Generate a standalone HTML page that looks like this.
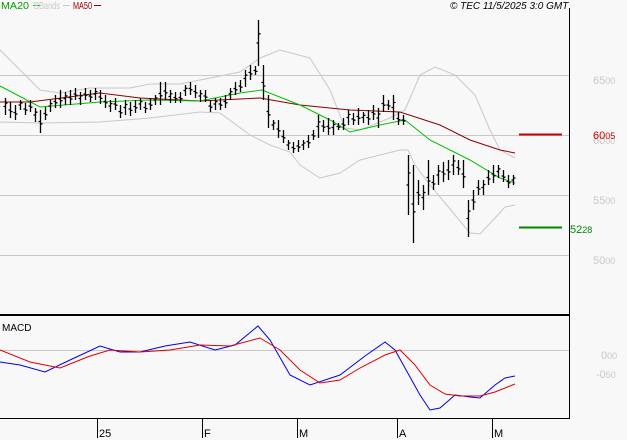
<!DOCTYPE html>
<html><head><meta charset="utf-8"><style>
html,body{margin:0;padding:0;background:#f8f8f8;width:627px;height:440px;overflow:hidden}
svg{display:block;font-family:"Liberation Sans",sans-serif}
</style></head><body>
<svg id="s" width="627" height="440" viewBox="0 0 627 440" xmlns="http://www.w3.org/2000/svg">
<rect width="627" height="440" fill="#f8f8f8"/>
<g stroke="#c8c8c8" stroke-width="1">
<line x1="0" y1="75.5" x2="569" y2="75.5"/>
<line x1="0" y1="135.5" x2="569" y2="135.5"/>
<line x1="0" y1="195.5" x2="569" y2="195.5"/>
<line x1="0" y1="255.5" x2="569" y2="255.5"/>
<line x1="0" y1="350.5" x2="569" y2="350.5"/>
</g>
<polyline fill="none" stroke="#c8c8c8" points="0,50 40,90 60,93 90,88 130,88 150,84 180,84 200,80 240,72 260,58 280,50 310,58 330,90 345,128 360,130 390,118 405,110 420,75 435,67 455,75 475,95 490,130 500,150 515,158"/>
<polyline fill="none" stroke="#c8c8c8" points="0,122 40,123 100,122 150,118 200,112 220,113 250,135 270,145 290,152 300,165 320,178 340,173 360,160 400,150 408,150 415,165 430,185 455,215 470,233 480,234 495,218 505,207 515,205"/>
<polyline fill="none" stroke="#8b0000" points="0,102 30,102 100,93 140,98 200,101 260,98 300,105 350,110 400,112 440,125 470,140 500,150 515,153"/>
<polyline fill="none" stroke="#00c000" points="0,86 40,107 100,102 150,100 200,101 240,93 262,90 300,105 330,120 350,132 380,125 405,120 430,140 470,160 500,178 515,183"/>
<g id="bars" stroke="#000" stroke-width="1.3"></g>
<line x1="519" y1="134.5" x2="562" y2="134.5" stroke="#cc0000" stroke-width="2"/>
<line x1="519" y1="227.5" x2="562" y2="227.5" stroke="#008800" stroke-width="2"/>
<line x1="569.5" y1="8" x2="569.5" y2="418" stroke="#000"/>
<line x1="0" y1="315" x2="570" y2="315" stroke="#000" stroke-width="2"/>
<line x1="0" y1="418.5" x2="570" y2="418.5" stroke="#000"/>
<polyline fill="none" stroke="#0000ee" points="0,362 20,365 45,372 70,360 100,346 120,352 140,352 165,346 190,342 215,350 235,345 258,326 270,340 290,375 310,385 340,375 365,356 385,342 395,350 405,368 420,395 430,410 440,408 455,395 470,397 480,398 495,385 505,378 515,376"/>
<polyline fill="none" stroke="#dd0000" points="0,350 30,362 60,368 90,356 110,350 140,352 170,350 200,345 230,346 260,338 280,350 300,370 320,383 340,380 360,368 385,355 400,350 415,365 430,385 445,394 460,396 480,396 495,392 515,384"/>
<g stroke="#000"><line x1="97.5" y1="418" x2="97.5" y2="438"/><line x1="202.5" y1="418" x2="202.5" y2="438"/><line x1="297.5" y1="418" x2="297.5" y2="438"/><line x1="397.5" y1="418" x2="397.5" y2="438"/><line x1="492.5" y1="418" x2="492.5" y2="438"/></g>
<g font-size="11" fill="#000"><text x="99" y="437">25</text><text x="204" y="437">F</text><text x="299" y="437">M</text><text x="399" y="437">A</text><text x="494" y="437">M</text></g>
<g font-size="11" fill="#c8c8c8"><text x="593" y="84">65<tspan font-size="9">00</tspan></text><text x="593" y="144">60<tspan font-size="9">00</tspan></text><text x="593" y="204">55<tspan font-size="9">00</tspan></text><text x="593" y="264">50<tspan font-size="9">00</tspan></text><text x="601" y="359">0<tspan font-size="9">00</tspan></text><text x="596" y="378">-0<tspan font-size="9">50</tspan></text></g>
<text x="593" y="139" font-size="11" fill="#cc0000">60<tspan font-size="9">05</tspan></text>
<text x="570" y="233" font-size="11" fill="#008800">52<tspan font-size="9">28</tspan></text>
<text x="1" y="9" font-size="10" fill="#00a000" textLength="28" lengthAdjust="spacingAndGlyphs">MA20</text><line x1="33" y1="5.5" x2="40" y2="5.5" stroke="#00c000"/>
<text x="34" y="9" font-size="10" fill="#c8c8c8" textLength="26" lengthAdjust="spacingAndGlyphs">BBands</text><line x1="63" y1="5.5" x2="70" y2="5.5" stroke="#c8c8c8"/>
<text x="73" y="9" font-size="10" fill="#8b0000" textLength="19" lengthAdjust="spacingAndGlyphs">MA50</text><line x1="94" y1="5.5" x2="101" y2="5.5" stroke="#8b0000"/>
<text x="450" y="9" font-size="10" font-style="italic" fill="#000">© TEC 11/5/2025 3:0 GMT</text>
<text x="2" y="331" font-size="10" fill="#000">MACD</text>
</svg>
<script>
var b=[[5,98,115],[10,102,118],[15,105,120],[20,100,110],[25,103,115],[30,100,112],[35,108,122],[40,110,133],[45,107,120],[50,100,112],[55,95,108],[60,90,108],[65,92,105],[70,90,105],[75,88,100],[80,92,105],[85,88,100],[90,90,102],[95,88,100],[100,90,104],[105,95,108],[110,100,112],[115,98,110],[120,105,118],[125,100,115],[130,102,116],[135,100,113],[140,98,110],[145,102,113],[150,98,110],[155,95,105],[160,82,105],[165,82,100],[170,90,103],[175,92,103],[180,92,103],[185,85,96],[190,82,95],[195,85,98],[200,90,102],[205,90,102],[210,100,112],[215,98,110],[220,98,110],[225,95,108],[230,88,100],[235,82,95],[240,80,92],[245,70,87],[250,65,80],[255,66,75],[258,20,66],[263,65,100],[268,95,128],[273,120,130],[278,120,138],[283,130,143],[288,140,150],[293,142,153],[298,140,152],[303,140,150],[308,135,148],[313,130,140],[318,115,138],[323,120,132],[328,118,135],[333,120,135],[338,123,130],[343,118,130],[348,110,125],[353,113,125],[358,108,125],[363,112,123],[368,110,125],[373,105,120],[378,108,128],[383,95,112],[388,100,110],[393,95,120],[398,112,125],[403,115,125],[408,155,215],[413,165,243],[418,180,205],[423,185,210],[428,160,195],[433,175,190],[438,165,185],[443,162,182],[448,160,180],[453,155,175],[458,160,175],[463,160,188],[468,200,237],[473,190,210],[478,180,195],[483,180,195],[488,170,185],[493,165,183],[498,165,178],[503,170,182],[508,175,188],[513,175,185]];
var g=document.getElementById('bars'),d='';
b.forEach(function(a,i){var x=a[0]+.5,c=a[1]+(a[2]-a[1])*(i%3==0?.3:.6);d+='M'+x+' '+a[1]+'V'+a[2]+'M'+(x-2)+' '+(a[1]+(a[2]-a[1])*.5)+'H'+x+'M'+x+' '+c+'H'+(x+2);});
var p=document.createElementNS('http://www.w3.org/2000/svg','path');p.setAttribute('d',d);p.setAttribute('fill','none');g.appendChild(p);
</script>
</body></html>
